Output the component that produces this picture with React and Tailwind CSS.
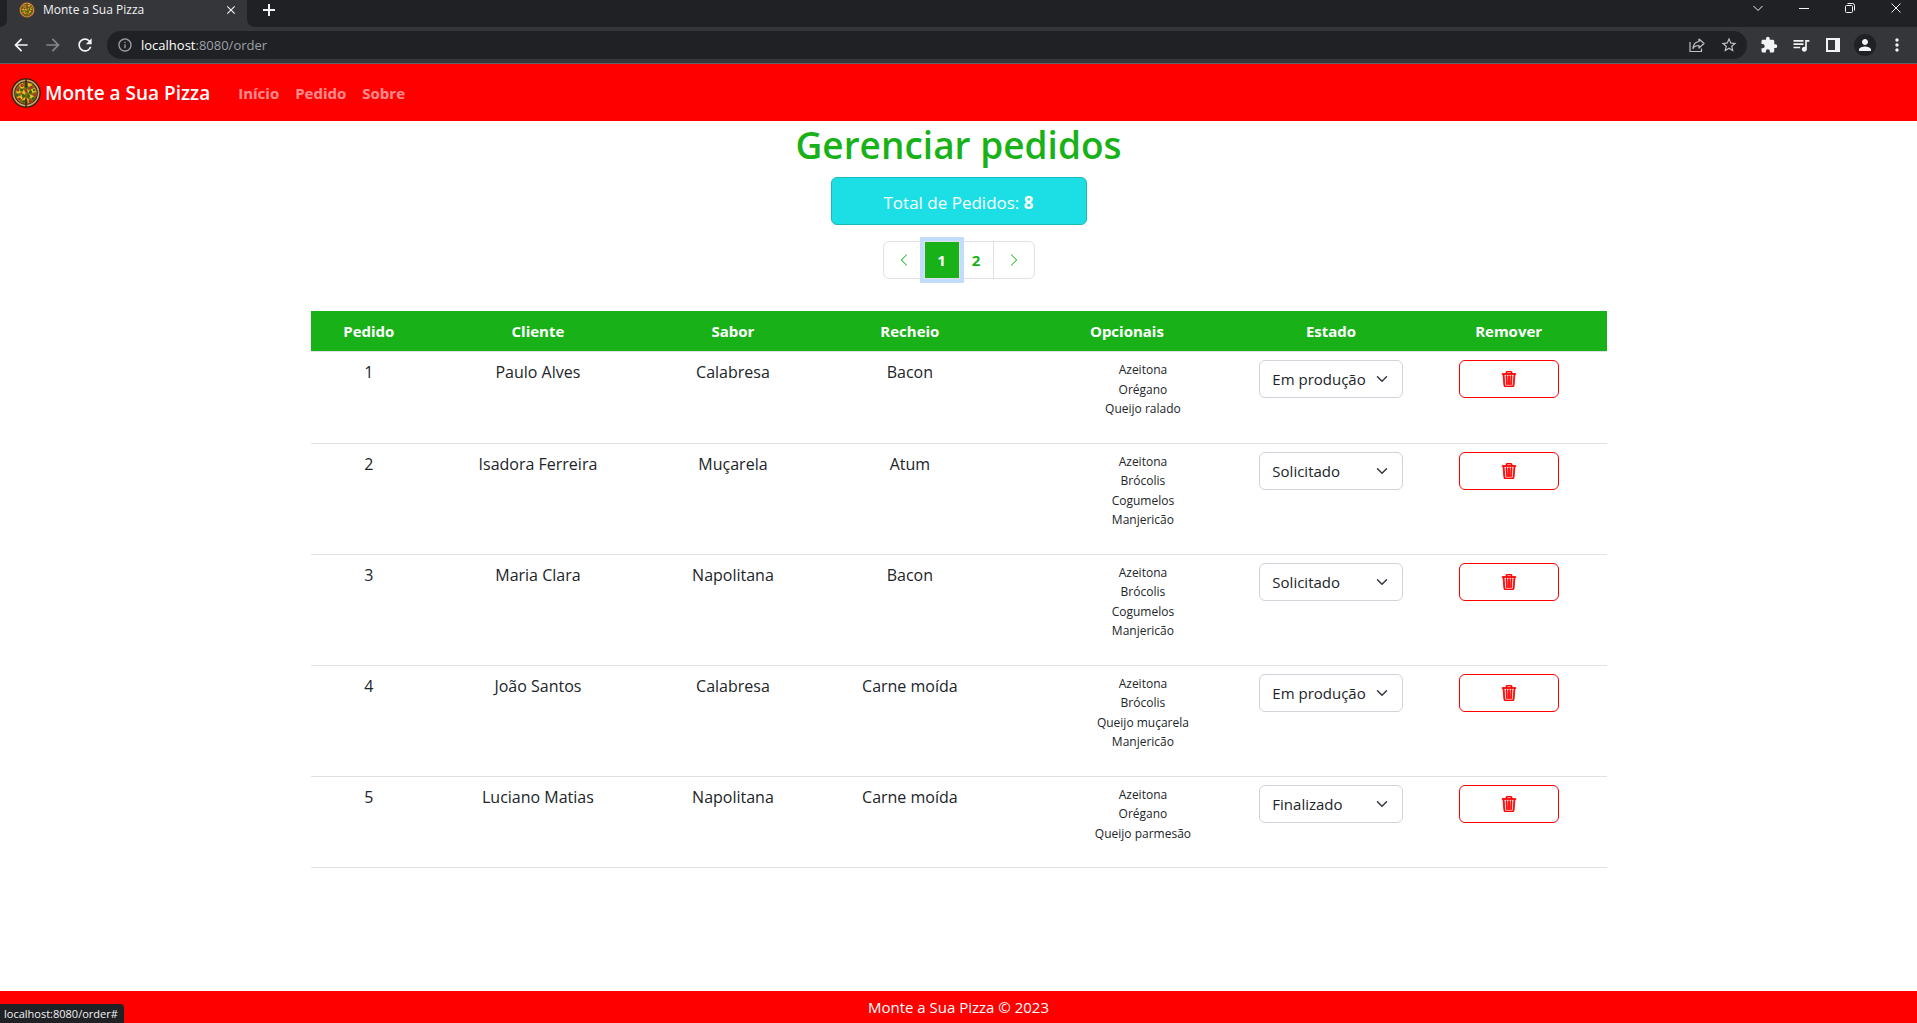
import React from "react";
import {
  MdArrowBack,
  MdArrowForward,
  MdRefresh,
  MdInfoOutline,
  MdStarBorder,
  MdExtension,
  MdQueueMusic,
  MdPerson,
  MdMoreVert,
  MdClose,
} from "react-icons/md";
import { BsTrash3, BsChevronLeft, BsChevronRight } from "react-icons/bs";

const STATES = ["Solicitado", "Em produção", "Finalizado"];

const ORDERS = [
  { id: 1, client: "Paulo Alves", flavor: "Calabresa", filling: "Bacon", extras: ["Azeitona", "Orégano", "Queijo ralado"], state: "Em produção" },
  { id: 2, client: "Isadora Ferreira", flavor: "Muçarela", filling: "Atum", extras: ["Azeitona", "Brócolis", "Cogumelos", "Manjericão"], state: "Solicitado" },
  { id: 3, client: "Maria Clara", flavor: "Napolitana", filling: "Bacon", extras: ["Azeitona", "Brócolis", "Cogumelos", "Manjericão"], state: "Solicitado" },
  { id: 4, client: "João Santos", flavor: "Calabresa", filling: "Carne moída", extras: ["Azeitona", "Brócolis", "Queijo muçarela", "Manjericão"], state: "Em produção" },
  { id: 5, client: "Luciano Matias", flavor: "Napolitana", filling: "Carne moída", extras: ["Azeitona", "Orégano", "Queijo parmesão"], state: "Finalizado" },
];

const COLUMNS = [
  { label: "Pedido", width: "w-[9%]" },
  { label: "Cliente", width: "w-[17.1%]" },
  { label: "Sabor", width: "w-[13%]" },
  { label: "Recheio", width: "w-[14.3%]" },
  { label: "Opcionais", width: "w-[19.2%]" },
  { label: "Estado", width: "w-[12.3%]" },
  { label: "Remover", width: "w-[15.1%]" },
];

function Pizza({ className, dark = "#33200c" }) {
  return (
    <svg viewBox="0 0 30 30" className={className} aria-hidden="true">
      <circle cx="15" cy="15" r="14.8" fill={dark} />
      <circle cx="15" cy="15" r="13.4" fill="#c9a06a" />
      <circle cx="15" cy="15" r="11.8" fill={dark} />
      <circle cx="15" cy="15" r="11" fill="#8a6418" />
      <g fill="#e8bf1c">
        <path d="M8 7l4-2 1 5-3 1zM17 5l4 1-1 4-3-1zM5 13l4-2 2 3-5 2zM20 11l4-1 1 4-4 1zM6 19l5-2 1 3-4 3zM18 16l5 2-2 3-3-2zM11 22l3-3v6zM16 20l4 3-3 2zM12 12l3 1-1 4-3-2zM16 11l3 2-2 2z" />
      </g>
      <g fill="#a8322a">
        <circle cx="11" cy="7.5" r="1.6" />
        <circle cx="20" cy="9.5" r="1.7" />
        <circle cx="7" cy="12" r="1.5" />
        <circle cx="24" cy="17" r="1.6" />
        <circle cx="8.500" cy="21" r="1.6" />
        <circle cx="19" cy="23" r="1.6" />
        <circle cx="15" cy="13" r="1.4" />
      </g>
      <g fill="#2c6a1c">
        <circle cx="16" cy="9" r="1.6" />
        <circle cx="10.500" cy="12" r="1.5" />
        <circle cx="19.500" cy="14" r="1.6" />
        <circle cx="12.500" cy="18" r="1.7" />
        <circle cx="17.500" cy="18" r="1.7" />
        <circle cx="13" cy="23.500" r="1.4" />
        <circle cx="22" cy="20.500" r="1.5" />
        <circle cx="6" cy="17" r="1.4" />
        <circle cx="23" cy="12" r="1.2" />
      </g>
      <path d="M15 1v8M15 21v8" stroke={dark} strokeWidth="1.4" />
    </svg>
  );
}

function IconButton({ label, className = "", children }) {
  return (
    <button type="button" aria-label={label} className={`flex h-8 w-8 items-center justify-center ${className}`}>
      {children}
    </button>
  );
}

function WindowButton({ label, path }) {
  return (
    <button type="button" aria-label={label} className="flex w-[46px] justify-center pb-1">
      <svg viewBox="0 0 10 10" className="h-2.5 w-2.5 overflow-visible" fill="none" stroke="currentColor">
        <path d={path} />
      </svg>
    </button>
  );
}

function TabStrip() {
  return (
    <div className="flex h-[27px] items-stretch overflow-hidden bg-[#35363a]">
      <div className="w-[7px] rounded-br-lg bg-[#202124]" />
      <div className="flex w-60 items-center pb-[7px] pl-3 pr-[9px]">
        <Pizza className="h-4 w-4" dark="#7a4a14" />
        <span className="ml-2 flex-1 text-[12px] leading-4 text-[#f1f3f4]">Monte a Sua Pizza</span>
        <button type="button" aria-label="Fechar guia" className="text-[#f1f3f4]">
          <MdClose className="h-3.5 w-3.5" />
        </button>
      </div>
      <div className="flex flex-1 items-center justify-between rounded-bl-lg bg-[#202124] pb-[7px] pl-4">
        <button type="button" aria-label="Nova guia" className="text-[#f1f3f4]">
          <svg viewBox="0 0 12 12" className="h-3 w-3" fill="none" stroke="currentColor" strokeWidth="2">
            <path d="M6 0v12M0 6h12" />
          </svg>
        </button>
        <div className="-mr-0.5 flex text-[#f1f3f4]">
          <WindowButton label="Pesquisar guias" path="M0.5 3l4.5 4.5L9.5 3" />
          <WindowButton label="Minimizar" path="M0 5.5h10" />
          <WindowButton label="Restaurar" path="M0.5 3.5a1 1 0 0 1 1-1h5a1 1 0 0 1 1 1v5a1 1 0 0 1-1 1h-5a1 1 0 0 1-1-1zM2.5 0.5h5a2 2 0 0 1 2 2v5" />
          <WindowButton label="Fechar" path="M0.5 0.5l9 9M9.5 0.5l-9 9" />
        </div>
      </div>
    </div>
  );
}

function Toolbar() {
  return (
    <div className="flex h-[37px] items-center border-b border-[#5f6368] bg-[#35363a] pl-[5px] pr-1 text-[#f1f3f4]">
      <IconButton label="Voltar">
        <MdArrowBack className="h-5 w-5" />
      </IconButton>
      <IconButton label="Avançar" className="text-[#85868a]">
        <MdArrowForward className="h-5 w-5" />
      </IconButton>
      <IconButton label="Recarregar">
        <MdRefresh className="h-5 w-5" />
      </IconButton>
      <div className="ml-1.5 mr-1.5 flex h-7 flex-1 items-center rounded-full bg-[#202124] pl-2.5 pr-0.5">
        <MdInfoOutline className="h-4 w-4 text-[#9aa0a6]" />
        <span className="ml-2 flex-1 text-[13px] leading-5 text-[#9aa0a6]">
          <span className="text-white">localhost</span>:8080/order
        </span>
        <IconButton label="Compartilhar" className="text-[#bdc1c6]">
          <svg viewBox="0 0 16 16" className="h-4 w-4" fill="none" stroke="currentColor" strokeWidth="1.2">
            <path d="M1 5v9.5h11.5v-3" />
            <path d="M10 2l5 4.500-5 4.500V8.500C7 8.500 5 9.500 4 11.500c.3-4 2.500-6.500 6-7z" strokeLinejoin="round" />
          </svg>
        </IconButton>
        <IconButton label="Favoritos" className="text-[#bdc1c6]">
          <MdStarBorder className="h-[18px] w-[18px]" />
        </IconButton>
      </div>
      <IconButton label="Extensões">
        <MdExtension className="h-[18px] w-[18px]" />
      </IconButton>
      <IconButton label="Controle de mídia">
        <MdQueueMusic className="h-5 w-5" />
      </IconButton>
      <IconButton label="Painel lateral">
        <svg viewBox="0 0 14 14" className="h-3.5 w-3.5" fill="currentColor" fillRule="evenodd">
          <path d="M0 0h14v14H0zM2 2v10h7V2z" />
        </svg>
      </IconButton>
      <IconButton label="Perfil">
        <span className="flex h-[22px] w-[22px] items-center justify-center rounded-full bg-[#202124]">
          <MdPerson className="h-[18px] w-[18px]" />
        </span>
      </IconButton>
      <IconButton label="Menu">
        <MdMoreVert className="h-5 w-5" />
      </IconButton>
    </div>
  );
}

function NavBar() {
  return (
    <nav className="flex h-[57px] items-center bg-[#ff0000] px-[11px]">
      <a href="#" className="flex items-center font-semibold text-white">
        <Pizza className="mr-1 h-[30px] w-[30px]" />
        <span className="text-[19px] leading-[30px]">Monte a Sua Pizza</span>
      </a>
      <div className="ml-7 flex gap-4 text-[15px] font-bold leading-6 text-white/55">
        <a href="#">Início</a>
        <a href="#">Pedido</a>
        <a href="#">Sobre</a>
      </div>
    </nav>
  );
}

function Pagination() {
  return (
    <div className="mt-4 flex h-[38px] rounded-md text-[15px] font-bold text-[#18b218]">
      <button type="button" aria-label="Anterior" className="flex w-[42px] items-center justify-center rounded-l-md border border-[#dee2e6]">
        <BsChevronLeft className="h-3.5 w-3.5" />
      </button>
      <button type="button" aria-current="page" className="z-10 -ml-px w-9 border border-[#dee2e6] bg-[#18b218] text-white ring-4 ring-[#c2dbfe]">
        1
      </button>
      <button type="button" className="-ml-px w-[35px] border border-[#dee2e6]">2</button>
      <button type="button" aria-label="Próxima" className="-ml-px flex w-[42px] items-center justify-center rounded-r-md border border-[#dee2e6]">
        <BsChevronRight className="h-3.5 w-3.5" />
      </button>
    </div>
  );
}

function StateSelect({ id, value }) {
  return (
    <div className="relative">
      <select
        aria-label={`Estado do pedido ${id}`}
        defaultValue={value}
        className="h-[38px] w-full appearance-none rounded-md border border-[#ced4da] bg-white pl-3 pr-8 text-[15px] leading-6 text-[#212529]"
      >
        {STATES.map((s) => (
          <option key={s}>{s}</option>
        ))}
      </select>
      <svg
        viewBox="0 0 16 16"
        className="pointer-events-none absolute inset-y-0 right-[15px] my-auto h-3 w-3"
        fill="none"
        stroke="#343a40"
        strokeWidth="2"
        strokeLinecap="round"
        strokeLinejoin="round"
      >
        <path d="m2 5 6 6 6-6" />
      </svg>
    </div>
  );
}

function OrdersTable() {
  return (
    <table className="mt-8 w-full max-w-[1296px] table-fixed border-collapse text-center text-base leading-6">
      <colgroup>
        {COLUMNS.map((c) => (
          <col key={c.label} className={c.width} />
        ))}
      </colgroup>
      <thead>
        <tr className="border-b border-[#dee2e6] bg-[#18b218] text-[15px] text-white">
          {COLUMNS.map((c) => (
            <th key={c.label} scope="col" className="p-2 font-bold">{c.label}</th>
          ))}
        </tr>
      </thead>
      <tbody>
        {ORDERS.map((o) => (
          <tr key={o.id} className="border-b border-[#dee2e6] align-top">
            <td className="p-2">{o.id}</td>
            <td className="p-2">{o.client}</td>
            <td className="p-2">{o.flavor}</td>
            <td className="p-2">{o.filling}</td>
            <td className="p-2">
              <ul className="mb-4 pl-8 text-[12px] leading-relaxed">
                {o.extras.map((e) => (
                  <li key={e}>{e}</li>
                ))}
              </ul>
            </td>
            <td className="p-2">
              <StateSelect id={o.id} value={o.state} />
            </td>
            <td className="p-2">
              <button
                type="button"
                aria-label={`Remover pedido ${o.id}`}
                className="mx-auto flex h-[38px] w-[100px] items-center justify-center rounded-md border border-[#ff0000] text-[#ff0000]"
              >
                <BsTrash3 className="h-4 w-4" stroke="currentColor" strokeWidth="0.8" />
              </button>
            </td>
          </tr>
        ))}
      </tbody>
    </table>
  );
}

export default function App() {
  return (
    <div className="flex min-h-screen flex-col bg-white font-['Open_Sans','Noto_Sans',sans-serif] text-[#212529]">
      <header>
        <TabStrip />
        <Toolbar />
        <NavBar />
      </header>
      <main className="flex flex-1 flex-col items-center px-3">
        <h1 className="mb-2 text-[37px] font-semibold leading-[48px] text-[#18b218]">Gerenciar pedidos</h1>
        <div className="flex h-12 w-64 items-center justify-center rounded-md border border-[#19b9be] bg-[#1bdfe4] pt-1 text-[17px] leading-6 text-white">
          <p>
            Total de Pedidos: <b>8</b>
          </p>
        </div>
        <Pagination />
        <OrdersTable />
      </main>
      <footer className="bg-[#ff0000] py-1 text-center text-[15px] leading-6 text-white">
        Monte a Sua Pizza © 2023
      </footer>
      <div className="fixed bottom-0 left-0 rounded-tr bg-[#202124] pl-1 pr-1.5 text-[11px] leading-[19px] text-[#f1f3f4]">
        localhost:8080/order#
      </div>
    </div>
  );
}
